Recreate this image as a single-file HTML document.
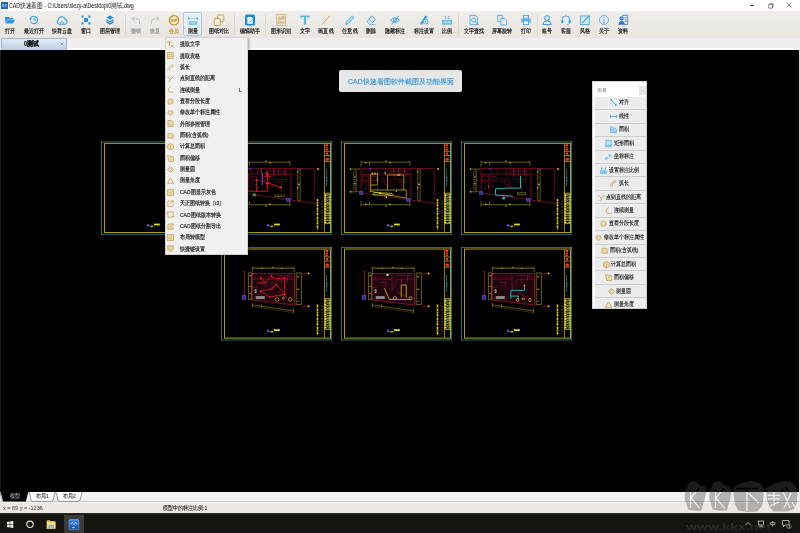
<!DOCTYPE html>
<html><head><meta charset="utf-8">
<style>
*{box-sizing:border-box;margin:0;padding:0}
html,body{width:800px;height:533px;overflow:hidden;background:#000;font-family:"Liberation Sans",sans-serif;color:#333}
.a{position:absolute}
#title,#tb,#tabbar,#menu,#panel,#ltabs,#status,#task{will-change:transform}
#title{left:0;top:0;width:800px;height:11px;background:#fff}
#tb{left:0;top:11px;width:800px;height:27px;background:linear-gradient(#efedea,#e9e5e1)}
#tabbar{left:0;top:38px;width:800px;height:12px;background:#efefef;border-bottom:2px solid #fafafa}
#canvas{left:0;top:50px;width:799px;height:442px;background:#000;border-left:1px solid #1a1a1a}
#rborder{left:799px;top:50px;width:1px;height:442px;background:#d8d8d8}
#ltabs{left:0;top:492.2px;width:800px;height:10.5px;background:#f8f8f8}
#status{left:0;top:503px;width:800px;height:10px;background:#ece9e5}
#task{left:0;top:513px;width:800px;height:20px;background:#141511;border-top:1px solid #2a2a26}
.ti{position:absolute;top:0;width:30px;margin-left:-15px;height:27px}
.ti svg{position:absolute;left:10px;top:3.6px;width:10px;height:10px;overflow:visible}
.ti span{position:absolute;left:-10px;right:-10px;top:17.1px;text-align:center;font-size:6px;line-height:7px;color:#222;-webkit-text-stroke:0.2px currentColor;white-space:nowrap;transform:scaleX(0.835)}
.sep{position:absolute;top:3px;width:1px;height:22px;background:#dcd8d3}
.mi{position:absolute;left:0;width:82px;height:11.35px}
.mi span{position:absolute;left:14px;top:2.8px;font-size:6px;line-height:7px;color:#2c2c2c;-webkit-text-stroke:0.2px currentColor;white-space:nowrap;transform:scaleX(0.835);transform-origin:0 50%}
.mi svg{position:absolute;left:1px;top:2.5px;width:7px;height:7px;overflow:visible}
.pb{position:absolute;left:2px;width:51.5px;height:13.43px;background:#ececec;border-bottom:1px solid #cdcdcd}
.pb div{position:absolute;left:0;right:0;top:2.6px;height:7px;display:flex;justify-content:center;align-items:center;font-size:6px;line-height:7px;color:#262626;-webkit-text-stroke:0.13px currentColor;white-space:nowrap}
.pb b{font-weight:normal;display:block;height:7px;position:relative}.pb b i{font-style:normal;position:absolute;left:0;top:0;transform:scaleX(0.835);transform-origin:0 50%}
.pb svg{display:block;flex:none;width:7px;height:7px;margin-right:1.5px;margin-left:-2px;overflow:visible}
</style></head><body>

<div id="title" class="a">
  <svg class="a" style="left:1px;top:1.5px" width="7" height="7" viewBox="0 0 7 7"><rect x="0" y="0" width="7" height="7" fill="#1a56a8"/><rect x="0.4" y="0.4" width="6.2" height="6.2" fill="#2a6cc0"/><path d="M3 2.6H1.6V4.4H3 M4 2.4V4.6 M5.6 2.4L4.2 3.5L5.6 4.6" fill="none" stroke="#e8f0ff" stroke-width="0.55"/></svg>
  <div class="a" style="left:9.4px;top:1.6px;font-size:6.5px;line-height:8px;color:#1e1e1e;white-space:nowrap;transform:scaleX(0.81);transform-origin:0 50%;-webkit-text-stroke:0.05px currentColor">CAD快速看图 - C:\Users\xiezy-a\Desktop\0测试.dwg</div>
  <div class="a" style="left:749.5px;top:4.9px;width:4.8px;height:0.6px;background:#444"></div>
  <svg class="a" style="left:767.5px;top:2.5px" width="6" height="6" viewBox="0 0 6 6"><path d="M1.8 1.6V0.7H5.2V4.1H4.3" fill="none" stroke="#444" stroke-width="0.6"/><rect x="0.8" y="1.7" width="3.4" height="3.4" fill="none" stroke="#444" stroke-width="0.6"/></svg>
  <svg class="a" style="left:786.2px;top:2.4px" width="6" height="6" viewBox="0 0 6 6"><path d="M0.5 0.5L5.5 5.5M5.5 0.5L0.5 5.5" stroke="#444" stroke-width="0.6"/></svg>
</div>

<div id="tb" class="a">
<div class="a" style="left:183.2px;top:1.2px;width:18.4px;height:24px;background:#e8f0fb;border:1px solid #a9c5ec;border-radius:2px"></div>
<div class="sep" style="left:125.2px"></div>
<div class="sep" style="left:233.7px"></div>
<div class="sep" style="left:265.2px"></div>
<div class="sep" style="left:457.5px"></div>
<div class="sep" style="left:536.7px"></div>
<div class="ti" style="left:9.75px"><svg viewBox="0 0 10 10"><path d="M0.3 2h3.3l1 1H8.4v1.4H2.3L0.3 8.4Z" fill="#1e8fe0"/><path d="M2.5 4.9H9.9L8.2 8.6H0.6Z" fill="#2a9ae8"/></svg><span>打开</span></div>
<div class="ti" style="left:33.7px"><svg viewBox="0 0 10 10"><path d="M1.6 6.6A3.7 3.7 0 1 0 1.3 4.2" fill="none" stroke="#35a3e8" stroke-width="1.1"/><path d="M0 3.2L1.4 5.4L2.9 3.4Z" fill="#35a3e8"/><path d="M5 3V5.3H6.9" fill="none" stroke="#35a3e8" stroke-width="0.9"/></svg><span>最近打开</span></div>
<div class="ti" style="left:62px"><svg viewBox="0 0 10 10"><path d="M2.4 9.2A2.3 2.3 0 0 1 1.3 4.9A3.6 3.8 0 0 1 8.3 4.4A2.5 2.5 0 0 1 8.3 9.2Z" fill="none" stroke="#35a3e8" stroke-width="1.1"/><path d="M3.7 9.2V7L5 5.9L6.3 7V9.2" fill="none" stroke="#35a3e8" stroke-width="0.7"/></svg><span>快看云盘</span></div>
<div class="ti" style="left:86px"><svg viewBox="0 0 10 10"><rect x="3" y="3" width="4" height="4" rx="0.8" fill="#1e8fe0"/><path d="M1.2 2.8V1.2H2.8 M7.2 1.2H8.8V2.8 M8.8 7.2V8.8H7.2 M2.8 8.8H1.2V7.2" fill="none" stroke="#1e8fe0" stroke-width="1.2"/><path d="M2.3 2.3L3.3 3.3M7.7 2.3L6.7 3.3M7.7 7.7L6.7 6.7M2.3 7.7L3.3 6.7" stroke="#1e8fe0" stroke-width="0.6"/></svg><span>窗口</span></div>
<div class="ti" style="left:110px"><svg viewBox="0 0 10 10"><path d="M5 0.6L8.6 2.6L5 4.6L1.4 2.6Z" fill="#1e8fe0"/><path d="M1.4 4.8L5 6.8L8.6 4.8 M1.4 6.9L5 8.9L8.6 6.9" fill="none" stroke="#1e8fe0" stroke-width="1.3"/></svg><span>图层管理</span></div>
<div class="ti" style="left:136px"><svg viewBox="0 0 10 10"><path d="M3.4 1.4L1 3.8L3.4 6.2 M1 3.8H5.6A3 3 0 0 1 8.6 6.8V9" fill="none" stroke="#b9b9b9" stroke-width="0.9"/></svg><span style="color:#9a9a9a">撤销</span></div>
<div class="ti" style="left:155px"><svg viewBox="0 0 10 10"><path d="M6.6 1.4L9 3.8L6.6 6.2 M9 3.8H4.4A3 3 0 0 0 1.4 6.8V9" fill="none" stroke="#b9b9b9" stroke-width="0.9"/></svg><span style="color:#9a9a9a">恢复</span></div>
<div class="ti" style="left:173.7px"><svg viewBox="0 0 10 10"><circle cx="5" cy="5.3" r="4.7" fill="#f3e6c6" stroke="#c48a1e" stroke-width="1.2"/><text x="5" y="6.9" font-size="4.3" text-anchor="middle" fill="#c0861c" font-weight="bold" font-family="Liberation Sans" textLength="7" lengthAdjust="spacingAndGlyphs">VIP</text></svg><span style="color:#c39a4a">会员</span></div>
<div class="ti" style="left:192.5px"><svg viewBox="0 0 10 10"><path d="M0.8 3.4H9.2" stroke="#35a3e8" stroke-width="0.6" stroke-dasharray="1.2 0.6"/><rect x="0" y="2.3" width="1.3" height="2.2" fill="#35a3e8"/><rect x="8.7" y="2.3" width="1.3" height="2.2" fill="#35a3e8"/><rect x="0.6" y="6.3" width="8.8" height="3.6" fill="#6ec5f0"/><path d="M2.4 8.1H7.6" stroke="#fff" stroke-width="0.8" stroke-dasharray="1 0.8"/></svg><span>测量</span></div>
<div class="ti" style="left:218.7px"><svg viewBox="0 0 10 10"><rect x="3.6" y="0" width="6.2" height="6.8" fill="none" stroke="#c9a050" stroke-width="1" rx="0.7"/><rect x="0.2" y="3.6" width="6.2" height="7" fill="#eeebe7" stroke="#c9a050" stroke-width="1" rx="0.7"/></svg><span>图纸对比</span></div>
<div class="ti" style="left:250px"><svg viewBox="0 0 10 10"><rect x="0" y="-0.5" width="10" height="11" rx="1.6" fill="#1a8ce0"/><path d="M2.4 2H6.3L7.8 3.5V8.8H2.4Z" fill="#fff"/><path d="M4.2 7.6L7.6 4.2" stroke="#1a8ce0" stroke-width="0.8"/></svg><span>编辑助手</span></div>
<div class="ti" style="left:280.7px"><svg viewBox="0 0 10 10"><rect x="0.4" y="-0.4" width="9.2" height="10.8" fill="#eee3cc" stroke="#cdb07a" stroke-width="0.8"/><path d="M2 4.2L3.6 1.6L5.2 4.2Z M6 1.8H8.2V4H6Z M2.2 6.2H4.4V8.4H2.2Z" fill="none" stroke="#b38d47" stroke-width="0.55"/><circle cx="7.1" cy="7.3" r="1.1" fill="none" stroke="#b38d47" stroke-width="0.55"/></svg><span>图形识别</span></div>
<div class="ti" style="left:304.7px"><svg viewBox="0 0 10 10"><path d="M0.4 0.4H9.6V2.8H8.2L7.4 2H6.1V9.8H3.9V2H2.6L1.8 2.8H0.4Z" fill="#55b9ee"/></svg><span>文字</span></div>
<div class="ti" style="left:325.7px"><svg viewBox="0 0 10 10"><path d="M0.8 9.6L9.2 0.6" stroke="#c9a050" stroke-width="1"/></svg><span>画直线</span></div>
<div class="ti" style="left:350.2px"><svg viewBox="0 0 10 10"><path d="M0.8 9.6L1.3 7.1L7.4 1L9 2.6L2.9 8.7Z" fill="#bfe3f7" stroke="#35a3e8" stroke-width="0.9"/></svg><span>任意线</span></div>
<div class="ti" style="left:370.5px"><svg viewBox="0 0 10 10"><path d="M5.6 0.8L9.4 4.6L4.9 9.1H3.1L0.9 6.9Z" fill="none" stroke="#35a3e8" stroke-width="0.9"/><path d="M3.2 4.3L6.9 7.8" stroke="#35a3e8" stroke-width="0.9"/><path d="M0.9 6.9L3.2 4.3L6.9 7.8L4.9 9.1H3.1Z" fill="#bfe3f7"/><path d="M4.5 9.6H9.6" stroke="#35a3e8" stroke-width="0.6"/></svg><span>删除</span></div>
<div class="ti" style="left:394.5px"><svg viewBox="0 0 10 10"><path d="M0.4 5.2Q5 0.6 9.6 5.2Q5 9.8 0.4 5.2Z" fill="none" stroke="#35a3e8" stroke-width="0.9"/><circle cx="5" cy="5.2" r="1.5" fill="none" stroke="#35a3e8" stroke-width="0.8"/><path d="M1.6 9.4L8.6 1" stroke="#35a3e8" stroke-width="0.9"/></svg><span>隐藏标注</span></div>
<div class="ti" style="left:423.7px"><svg viewBox="0 0 10 10"><path d="M6.2 0.4L8.4 1.8L3.2 9.6L0.8 9.2Z" fill="#35a3e8"/><circle cx="6.6" cy="6.6" r="2.4" fill="#eeebe7" stroke="#35a3e8" stroke-width="0.8"/><circle cx="6.6" cy="6.6" r="0.8" fill="#35a3e8"/></svg><span>标注设置</span></div>
<div class="ti" style="left:446.7px"><svg viewBox="0 0 10 10"><text x="5" y="3.6" font-size="3.8" text-anchor="middle" fill="#35a3e8" font-weight="bold" font-family="Liberation Sans">1:1</text><rect x="0.2" y="5.4" width="9.6" height="3.8" fill="#79c9f1" stroke="#35a3e8" stroke-width="0.5"/><path d="M1.6 7.3H8.4" stroke="#fff" stroke-width="0.7" stroke-dasharray="0.9 0.6"/></svg><span>比例</span></div>
<div class="ti" style="left:473.7px"><svg viewBox="0 0 10 10"><path d="M1 0.4H6.6L8.6 2.4V9.6H1Z" fill="none" stroke="#35a3e8" stroke-width="0.8"/><circle cx="4.7" cy="5" r="2" fill="none" stroke="#35a3e8" stroke-width="0.8"/><path d="M6.1 6.5L9.2 9.6" stroke="#35a3e8" stroke-width="1"/></svg><span>文字查找</span></div>
<div class="ti" style="left:502.2px"><svg viewBox="0 0 10 10"><path d="M0.6 0.4H5.4V6.6H0.6Z" fill="none" stroke="#35a3e8" stroke-width="0.8"/><path d="M3.8 3.4H7.8L9.6 5.2V10H3.8Z" fill="#eeebe7" stroke="#35a3e8" stroke-width="0.8"/></svg><span>屏幕旋转</span></div>
<div class="ti" style="left:525.5px"><svg viewBox="0 0 10 10"><rect x="2.4" y="0.6" width="5.2" height="2.6" fill="none" stroke="#35a3e8" stroke-width="0.8"/><rect x="0.3" y="3.2" width="9.4" height="4.6" rx="1" fill="#5cbcf0"/><rect x="2.4" y="6" width="5.2" height="3.6" fill="#fff" stroke="#35a3e8" stroke-width="0.8"/></svg><span>打印</span></div>
<div class="ti" style="left:547.2px"><svg viewBox="0 0 10 10"><circle cx="5" cy="3" r="2.4" fill="none" stroke="#2c9be6" stroke-width="1"/><path d="M0.8 9.6Q1 5.8 5 5.8Q9 5.8 9.2 9.6Z" fill="none" stroke="#2c9be6" stroke-width="1"/></svg><span>账号</span></div>
<div class="ti" style="left:566.2px"><svg viewBox="0 0 10 10"><path d="M1.3 6V4.6A3.7 3.7 0 0 1 8.7 4.6V6" fill="none" stroke="#2c9be6" stroke-width="0.9"/><rect x="0.3" y="5" width="2" height="3.2" rx="0.7" fill="#2c9be6"/><rect x="7.7" y="5" width="2" height="3.2" rx="0.7" fill="#2c9be6"/><path d="M8.6 8.2Q8.2 9.6 5.6 9.6" fill="none" stroke="#2c9be6" stroke-width="0.7"/></svg><span>客服</span></div>
<div class="ti" style="left:585px"><svg viewBox="0 0 10 10"><rect x="0.5" y="1" width="8.6" height="8.6" fill="#d9eefa" stroke="#35a3e8" stroke-width="0.8"/><path d="M2 8.2L9.6 0.4" stroke="#35a3e8" stroke-width="1.2"/></svg><span>风格</span></div>
<div class="ti" style="left:603.7px"><svg viewBox="0 0 10 10"><circle cx="5" cy="5" r="4.5" fill="none" stroke="#35a3e8" stroke-width="0.8"/><path d="M5 4.1V7.9 M3.9 7.9H6.1 M4.1 4.1H5" stroke="#35a3e8" stroke-width="0.8"/><circle cx="5" cy="2.6" r="0.6" fill="#35a3e8"/></svg><span>关于</span></div>
<div class="ti" style="left:622.5px"><svg viewBox="0 0 10 10"><path d="M4.2 0.4H9.6V9.6H6" fill="none" stroke="#2a78c8" stroke-width="0.8"/><path d="M6.2 2.8H8.6 M6.8 4.8H8.6 M6.8 6.8H8.6" stroke="#2a78c8" stroke-width="0.7"/><circle cx="3.6" cy="3.4" r="2.1" fill="#2a78c8"/><path d="M0.3 9.8Q0.6 6 3.6 6Q6.6 6 6.9 9.8Z" fill="#2a78c8"/><path d="M1.8 3.2H5.4" stroke="#fff" stroke-width="0.5"/></svg><span>资料</span></div>
<!--/tb-->
</div>

<div id="tabbar" class="a">
  <div class="a" style="left:1px;top:0;width:65.5px;height:11.6px;background:linear-gradient(#e4ebf5,#bdcde3);border:1px solid #9ab3d6;border-bottom:0"></div>
  <div class="a" style="left:24px;top:2.3px;font-size:6.5px;line-height:7px;font-weight:bold;color:#111;-webkit-text-stroke:0.2px currentColor;transform:scaleX(0.85);transform-origin:0 50%">0测试</div>
  <svg class="a" style="left:59.5px;top:4px" width="4" height="4" viewBox="0 0 4 4"><path d="M0.4 0.4L3.6 3.6M3.6 0.4L0.4 3.6" stroke="#8a8a8a" stroke-width="0.6"/></svg>
</div>

<div id="canvas" class="a"></div>
<div id="rborder" class="a"></div>
<!--cv-->
<svg class="a" style="left:0;top:0" width="800" height="533" viewBox="0 0 800 533"><defs><g id="fr">
<rect x="0.5" y="0.5" width="110" height="92.4" fill="none" stroke="#1b6e6e" stroke-width="1"/>
<rect x="3.5" y="2" width="106" height="89.1" fill="none" stroke="#b09c1c" stroke-width="1"/>
<path d="M103.5 2V91.1 M103.5 9.9H109.5 M103.5 14.1H109.5 M103.5 20.1H109.5" stroke="#b09c1c" stroke-width="0.8" fill="none"/>
<g fill="#e06020"><rect x="0" y="0" width="1.2" height="1.2"/><rect x="0" y="92.2" width="1.2" height="1.2"/><rect x="109.8" y="0" width="1.2" height="1.2"/></g>
<path d="M105.8 2.8V9.2" stroke="#ff2a20" stroke-width="2.6" stroke-dasharray="2.4 0.6 1.2 0.6 2"/><path d="M106 11V13.4" stroke="#ff2a20" stroke-width="2"/><path d="M106.2 16.6V19.2" stroke="#ff2a20" stroke-width="3.4"/>
<path d="M105.6 28V45" stroke="#2a80ff" stroke-width="0.8" stroke-dasharray="2.2 0.5"/><path d="M104.8 36.5H107.5 M105 39H107.2" stroke="#2a80ff" stroke-width="0.6"/>
<rect x="103.5" y="51.8" width="5.8" height="30.5" fill="#141000" stroke="#d8c420" stroke-width="0.8"/>
<path d="M104.7 52.5V81.5" stroke="#e4d024" stroke-width="1.5" stroke-dasharray="2.2 0.5 1.4 0.5"/>
<path d="M108.2 52.5V81.5" stroke="#e4d024" stroke-width="1.3" stroke-dasharray="1.6 0.6 2.4 0.5"/>
<path d="M106.4 53V81" stroke="#3a8cff" stroke-width="1.1" stroke-dasharray="1.6 0.9"/>
<path d="M103.5 62H109.3 M103.5 72H109.3" stroke="#d8c420" stroke-width="0.6"/>
<path d="M96.5 57.5V88" stroke="#e0cc20" stroke-width="1.6" stroke-dasharray="2.5 0.5 1 0.5"/>
<path d="M101 59V88" stroke="#b09c1c" stroke-width="0.6" stroke-dasharray="1.5 1.5"/>
<circle cx="47.2" cy="84" r="1.4" fill="#2830d0"/><circle cx="47.2" cy="84" r="0.6" fill="#e0d020"/><path d="M49.2 84.8H52.4" stroke="#e0d020" stroke-width="1.2"/><path d="M53 83.1H58.8" stroke="#e8d820" stroke-width="1.8"/>
</g><g id="p1">
<path d="M19.6 20.4H68.35 M19.6 18.8V24.8 M68.35 18.8V23.9 M28 20.4V23.5 M19.6 63H68.35 M19.6 59.5V64.5 M28 59.5V63 M68.35 59V64.5 M14.6 28V49.5 M10.5 27.3H19 M10.5 50H17" stroke="#b09c1c" stroke-width="0.6" fill="none"/><path d="M12.4 29V48.5" stroke="#b09c1c" stroke-width="1" stroke-dasharray="1.2 0.8" fill="none" opacity="0.8"/>
<path d="M78.7 27.2V58.6 M76.2 27.2V58.6 M76.2 27.2H79.5 M76.2 58.6H79.5" fill="none" stroke="#b09c1c" stroke-width="0.55"/>
<g fill="#d8c020"><circle cx="24.3" cy="21" r="0.8"/><circle cx="48.7" cy="21" r="0.8"/><circle cx="44.5" cy="19.2" r="0.7"/><circle cx="24.3" cy="62.6" r="0.8"/><circle cx="48.7" cy="62.6" r="0.8"/><circle cx="44.5" cy="64.2" r="0.7"/><circle cx="9.1" cy="27.3" r="0.9"/><circle cx="9.1" cy="50" r="0.9"/><circle cx="96.5" cy="27.2" r="1"/><circle cx="77.5" cy="42.6" r="0.9"/><circle cx="76.2" cy="30" r="0.7"/><circle cx="76.2" cy="46" r="0.8"/><circle cx="13.4" cy="35" r="0.7"/><circle cx="13.4" cy="42" r="0.7"/></g>
<path d="M19.6 26.7H92.7V59.5 M19.6 51.1L94.6 61.9 M19.6 26.7V50.5 M69.3 26.7V58 M19.6 38.4H28 M19.6 32.8H28.5V38 M44.5 26.7V32.3 M52 26.7V32.5 M57 26.7V32.5 M63.2 26.7V32.5 M44.5 32.5H69.3 M47 29.5H66" stroke="#8a0e32" stroke-width="0.75" fill="none"/>
<path d="M22.5 41.2A3.2 3.2 0 0 1 25.7 44.4 M67.5 49.2A3.2 3.2 0 0 1 70.7 52.4 M24 45V49" stroke="#8a0e32" stroke-width="0.5" fill="none"/>
<path d="M28.4 32H68.4 M30.3 27V32 M35.9 27V32 M52.8 27V32 M63.4 27V32 M52.8 32V37.6H64.65V32 M27.15 32V50 M19.6 39.5H27 M20.9 34.5H27 M20.9 40.1V34.5 M36 44V50 M44 45H52 M55 40H66 M60 40V50" stroke="#8a0e32" stroke-width="0.55" fill="none"/>
<circle cx="29.65" cy="42.6" r="2.3" fill="none" stroke="#8a0e32" stroke-width="0.55"/><circle cx="40.9" cy="38.25" r="1.9" fill="none" stroke="#8a0e32" stroke-width="0.55"/><circle cx="45.9" cy="40.1" r="3" fill="none" stroke="#8a0e32" stroke-width="0.6"/><rect x="31" y="35" width="4" height="3.5" fill="none" stroke="#8a0e32" stroke-width="0.5"/>
<rect x="17.9" y="49.4" width="3.5" height="3.5" fill="#3c3090" stroke="#7070e0" stroke-width="0.4"/><rect x="65.2" y="56.4" width="3.4" height="3.4" fill="#3c3090" stroke="#7070e0" stroke-width="0.4"/>
<circle cx="28.5" cy="27.2" r="0.9" fill="#4040ff"/>
</g><g id="p2">
<path d="M30.3 26.2H73V57.7L30.3 52.6Z" fill="#22040e" stroke="#8a0e32" stroke-width="0.9"/>

<path d="M30.8 21H72.5 M30.8 19V25.1 M72.5 19V25.1 M30.8 57.5L71.9 63.5 M30.8 55.5V60 M71.9 61V66 M40 57V60" stroke="#b09c1c" stroke-width="0.55" fill="none"/><path d="M30.8 19.9H72.5 M30.8 59.2L71.9 65.2" stroke="#b09c1c" stroke-width="0.4" fill="none" opacity="0.7"/>
<path d="M26.9 25.6H30.3V52H26.9Z" fill="none" stroke="#b09c1c" stroke-width="0.6"/>
<path d="M74.7 25.6H79.8V57.1H74.7Z" fill="none" stroke="#b09c1c" stroke-width="0.6"/>
<path d="M79.8 26.2H87.1 M79.8 58.8H87.1 M23 24V48.7 M21.8 24H24.2" stroke="#8a0e32" stroke-width="0.9"/>
<g fill="#d8c020"><circle cx="87.1" cy="26.2" r="1"/><circle cx="87.1" cy="58.8" r="1"/><circle cx="40.4" cy="21" r="0.7"/><circle cx="51.6" cy="20" r="0.7"/><circle cx="60.1" cy="21" r="0.7"/><circle cx="28.6" cy="28.45" r="0.7"/><circle cx="28.6" cy="39" r="0.7"/><circle cx="28.6" cy="46" r="0.7"/><circle cx="76.5" cy="29.5" r="0.8"/><circle cx="76.5" cy="42" r="0.8"/><circle cx="76.5" cy="54" r="0.7"/></g>
<path d="M30.3 31.8H50.5 M50.5 26.2V43 M50.5 43L56.1 31.8 M55 28.45H70 M56.1 31.8H73 M60 31.8V37 M66 28.45V34 M34 29V31.8 M38 35H46 M44 35V40 M36 40H30.3 M56 45L66 50" stroke="#a01840" stroke-width="0.55" fill="none"/>
<rect x="33.1" y="41.9" width="2" height="4" fill="#8a8a8a"/><rect x="34.2" y="48.7" width="9" height="3" fill="#8a8a8a"/>
<rect x="20.5" y="48.3" width="3.8" height="3.6" fill="#3c3090" stroke="#7070e0" stroke-width="0.4"/>
<circle cx="31" cy="26.6" r="0.8" fill="#4040ff"/>
</g></defs>
<g transform="translate(101 141.4)"><use href="#fr"/><g transform="translate(0.5 0.35)"></g></g>
<g transform="translate(221 141.4)"><use href="#fr"/><g transform="translate(0.5 0.35)"><use href="#p1"/><path d="M35.2 38.5V49.5 M20 49.5H45.8 M45.8 41L59.3 45.7 M45.8 29.2V49.5 M40 27V31 M42 35H50" stroke="#ff2020" stroke-width="0.8" fill="none"/><path d="M40.7 30.9V43.6" stroke="#8040c0" stroke-width="1.1"/><g fill="#ff2020"><circle cx="45.8" cy="33" r="1.2"/><circle cx="45.8" cy="41" r="1.1"/><ellipse cx="45.8" cy="41.2" rx="1.8" ry="0.8"/><circle cx="59.3" cy="45.7" r="1.1"/><circle cx="35.2" cy="38.5" r="1"/></g><circle cx="32.7" cy="52.9" r="1.3" fill="#30b040"/><circle cx="34" cy="53.6" r="0.9" fill="#30b040"/><circle cx="31.5" cy="54.2" r="0.8" fill="#ff2020"/><path d="M53.4 52V54.6H62.7V52 M56.5 52V54.6 M59.6 52V54.6" stroke="#c8b420" stroke-width="0.5" fill="none"/><g fill="#30c040"><circle cx="44.5" cy="30.5" r="0.5"/><circle cx="37" cy="38.5" r="0.5"/><circle cx="34.5" cy="43" r="0.5"/></g></g></g>
<g transform="translate(341 141.4)"><use href="#fr"/><g transform="translate(0.5 0.35)"><use href="#p1"/><path d="M29.1 32.6H36V43.25H29.1 M29.1 32.6V50.75 M46 33.25H62.25V48.25 M46 33.25V48.25 M29.1 48.25H64.75V56.4 M29.1 49.5L64.75 56.4 M44 31.5V33.25" stroke="#d0c018" stroke-width="0.7" fill="none"/><path d="M32.3 50.8L50.5 51.6Q52 52.5 50.5 53.6L32.3 53.2Z" fill="none" stroke="#d8c820" stroke-width="0.8"/><g fill="#e0d020"><circle cx="31" cy="31.6" r="0.8"/><circle cx="33.5" cy="31.6" r="0.8"/><circle cx="36" cy="31.6" r="0.7"/><circle cx="43.5" cy="31" r="0.7"/><circle cx="56.6" cy="33.4" r="0.8"/><circle cx="38.5" cy="51.4" r="1"/><circle cx="44.75" cy="55.5" r="0.9"/><circle cx="54.75" cy="49.5" r="0.7"/><circle cx="36" cy="38" r="0.7"/></g><circle cx="31.5" cy="52.8" r="0.8" fill="#30b040"/><circle cx="33.8" cy="53" r="0.8" fill="#30b040"/><circle cx="58" cy="33" r="0.8" fill="#c0a0ff"/></g></g>
<g transform="translate(461 141.4)"><use href="#fr"/><g transform="translate(0.5 0.35)"><use href="#p1"/><path d="M59 33.9V46.4H45.9L34 47V53.25L51.5 54.5" stroke="#22c4cc" stroke-width="0.9" fill="none"/><circle cx="42.2" cy="56.4" r="1.3" fill="#22c4cc"/><path d="M56 51H64V53H56Z" stroke="#c8b420" stroke-width="0.5" fill="none"/><circle cx="27" cy="45" r="0.8" fill="#ff6020"/></g></g>
<g transform="translate(221 247.0)"><use href="#fr"/><g transform="translate(0.5 0.35)"><use href="#p2"/><path d="M39.3 30.8L43.7 35.8L50 28.3L52.5 31.45L63.1 30.8V47.1L54.95 37.1L50 41.45L39.3 43.95L48.1 49.6L63.1 47.1 M35.6 35.8H43.7" stroke="#ff2424" stroke-width="0.7" fill="none"/><g fill="#ff2424"><circle cx="39.3" cy="30.8" r="1"/><circle cx="50" cy="28.3" r="0.8"/><circle cx="63.1" cy="30.8" r="0.8"/><circle cx="63.1" cy="47.1" r="1"/><circle cx="54.95" cy="37.1" r="0.8"/><circle cx="39.3" cy="43.95" r="1"/><circle cx="48.1" cy="49.6" r="0.8"/></g><g fill="none" stroke="#d8c820" stroke-width="0.6"><circle cx="55.6" cy="52.1" r="1.8"/><circle cx="68.7" cy="52.1" r="1.8"/><circle cx="61.8" cy="50.8" r="1"/></g></g></g>
<g transform="translate(341 247.0)"><use href="#fr"/><g transform="translate(0.5 0.35)"><use href="#p2"/><path d="M42.9 40.8L47.9 52.1H68.5 M59.75 37.7H64.75V50.2 M59.75 37.7V50" stroke="#d4c41c" stroke-width="0.8" fill="none"/><g fill="none" stroke="#d4c41c" stroke-width="0.7"><circle cx="53.5" cy="50.8" r="1.6"/><circle cx="69.1" cy="50.8" r="1.6"/></g><circle cx="46" cy="27.5" r="1.2" fill="#e8e0a0"/></g></g>
<g transform="translate(461 247.0)"><use href="#fr"/><g transform="translate(0.5 0.35)"><use href="#p2"/><path d="M62.9 38V43H49.4V51.5 M49.4 48.7H56.7V51.5" stroke="#22c4cc" stroke-width="0.9" fill="none"/><g fill="none" stroke="#d4c41c" stroke-width="0.7"><ellipse cx="56.1" cy="52.6" rx="1.2" ry="1.6"/><ellipse cx="68.5" cy="52.6" rx="1.2" ry="1.6"/><path d="M60 51.5Q61.8 49.5 63.6 51.5 M60.5 52.5Q61.8 51 63 52.5"/></g><circle cx="62.9" cy="38" r="0.9" fill="#ff8020"/></g></g>
</svg>
<!--/cv-->

<!--ov-->
<div class="a" id="menu" style="left:164.5px;top:37.3px;width:83px;height:218.3px;background:#f0f0f0;border:1px solid #d4d4d4;box-shadow:1px 1px 2px rgba(0,0,0,0.35)">
<div class="mi" style="top:0.50px"><svg viewBox="0 0 8 8"><path d="M0.3 0.6H5.2V1.8H3.4V5.8H2.1V1.8H0.3Z" fill="#c9a04c"/><path d="M4.6 4.4L7.6 7.6M7.4 4.4L4.6 7.4" stroke="#c9a04c" stroke-width="1"/></svg><span>提取文字</span></div>
<div class="mi" style="top:11.85px"><svg viewBox="0 0 8 8"><rect x="0.6" y="0.6" width="6.4" height="7" fill="#f6ecd4" stroke="#c9a04c" stroke-width="0.8"/><path d="M0.6 2.9H7 M0.6 5.2H7 M2.7 0.6V7.6 M4.8 0.6V7.6" stroke="#c9a04c" stroke-width="0.6"/></svg><span>提取表格</span></div>
<div class="mi" style="top:23.20px"><svg viewBox="0 0 8 8"><path d="M1 7.5A6 6 0 0 1 7.5 1 M3 7.5A4 4 0 0 1 7.5 3" fill="none" stroke="#c9a04c" stroke-width="0.8"/></svg><span>弧长</span></div>
<div class="mi" style="top:34.55px"><svg viewBox="0 0 8 8"><path d="M0.5 2L4 5L7.5 1.5 M4 5L2 8" fill="none" stroke="#c9a04c" stroke-width="1"/></svg><span>点到直线的距离</span></div>
<div class="mi" style="top:45.90px"><svg viewBox="0 0 8 8"><path d="M4 0.8Q1 2.5 1.5 5Q2 7.5 5 7.2" fill="none" stroke="#c9a04c" stroke-width="1"/><circle cx="6.5" cy="7" r="0.8" fill="#c9a04c"/></svg><span>连续测量</span><span style="left:73px">L</span></div>
<div class="mi" style="top:57.25px"><svg viewBox="0 0 8 8"><path d="M1 4A3 3 0 1 1 4 7H1.5Z" fill="#e9d9b0" stroke="#c9a04c" stroke-width="0.8"/></svg><span>查看分段长度</span></div>
<div class="mi" style="top:68.60px"><svg viewBox="0 0 8 8"><path d="M4 7.8L0.8 4.5L2.5 1.5L4 3L5.5 1.5L7.2 4.5Z" fill="#e9d9b0" stroke="#c9a04c" stroke-width="0.8"/></svg><span>修改单个标注属性</span></div>
<div class="mi" style="top:79.95px"><svg viewBox="0 0 8 8"><path d="M1 0.6H5L7 2.6V7.6H1Z" fill="#e9d9b0" stroke="#c9a04c" stroke-width="0.8"/><path d="M2.5 5.5H5.5" stroke="#c9a04c" stroke-width="0.7"/></svg><span>外部参照管理</span></div>
<div class="mi" style="top:91.30px"><svg viewBox="0 0 8 8"><path d="M1 1.5H5.5A2 2 0 0 1 7.2 4V7H1Z" fill="#e9d9b0" stroke="#c9a04c" stroke-width="0.8"/></svg><span>面积(含弧线)</span></div>
<div class="mi" style="top:102.65px"><svg viewBox="0 0 8 8"><path d="M4 0.6L7.4 2.2V6.2L4 7.8L0.6 6.2V2.2Z" fill="#e9d9b0" stroke="#c9a04c" stroke-width="0.8"/><path d="M4 2.2V7.8" stroke="#c9a04c" stroke-width="0.6"/></svg><span>计算总面积</span></div>
<div class="mi" style="top:114.00px"><svg viewBox="0 0 8 8"><path d="M0.6 0.6L7.4 2V7.4H2Z" fill="#e9d9b0" stroke="#c9a04c" stroke-width="0.8"/></svg><span>面积偏移</span></div>
<div class="mi" style="top:125.35px"><svg viewBox="0 0 8 8"><path d="M4 0.5L7.5 4L4 7.5L0.5 4Z" fill="none" stroke="#c9a04c" stroke-width="0.9"/><circle cx="4" cy="4" r="1.4" fill="none" stroke="#c9a04c" stroke-width="0.6"/></svg><span>测量圆</span></div>
<div class="mi" style="top:136.70px"><svg viewBox="0 0 8 8"><path d="M4 1L7.5 7.2H0.5Z" fill="none" stroke="#c9a04c" stroke-width="0.9"/></svg><span>测量角度</span></div>
<div class="mi" style="top:148.05px"><svg viewBox="0 0 8 8"><rect x="0.6" y="0.8" width="6.8" height="6.4" fill="#e9d9b0" stroke="#c9a04c" stroke-width="0.8"/><path d="M1.5 6L3.2 3.5L4.5 5L6.5 2.5" fill="none" stroke="#c9a04c" stroke-width="0.6"/></svg><span>CAD图显示灰色</span></div>
<div class="mi" style="top:159.40px"><svg viewBox="0 0 8 8"><path d="M5 1.2H1V7.2H7V4" fill="none" stroke="#c9a04c" stroke-width="0.8"/><path d="M3 5L7 1 M4.8 0.8H7.2V3.2" fill="none" stroke="#c9a04c" stroke-width="0.8"/></svg><span>天正图纸转换（t3）</span></div>
<div class="mi" style="top:170.75px"><svg viewBox="0 0 8 8"><rect x="1" y="1" width="6" height="6" fill="none" stroke="#c9a04c" stroke-width="0.9"/><path d="M0 2.5L1 1L2.2 2.2 M8 5.5L7 7L5.8 5.8" fill="none" stroke="#c9a04c" stroke-width="0.7"/></svg><span>CAD图纸版本转换</span></div>
<div class="mi" style="top:182.10px"><svg viewBox="0 0 8 8"><path d="M5 1.2H1V7.2H7V4" fill="#e9d9b0" stroke="#c9a04c" stroke-width="0.8"/><path d="M3 5L7 1 M4.8 0.8H7.2V3.2" fill="none" stroke="#c9a04c" stroke-width="0.8"/></svg><span>CAD图纸分割导出</span></div>
<div class="mi" style="top:193.45px"><svg viewBox="0 0 8 8"><rect x="0.6" y="0.6" width="6.8" height="7" fill="#e9d9b0" stroke="#c9a04c" stroke-width="0.8"/><path d="M0.6 6.5L3 4L5 6L7.4 4" fill="none" stroke="#c9a04c" stroke-width="0.6"/><circle cx="5" cy="2.5" r="0.9" fill="#c9a04c"/></svg><span>布局转模型</span></div>
<div class="mi" style="top:204.80px"><svg viewBox="0 0 8 8"><path d="M0.6 0.8H7.4V5.5L4 7.8L0.6 5.5Z" fill="#dcc38a" stroke="#c9a04c" stroke-width="0.6"/><path d="M2 3H6 M2 4.6H6" stroke="#fff" stroke-width="0.6"/></svg><span>快捷键设置</span></div>
</div>
<div class="a" id="panel" style="left:592.4px;top:81.1px;width:54.6px;height:228.2px;background:#fff;border:0.5px solid #cfcfcf;overflow:hidden">
<div class="a" style="left:3.5px;top:5px;font-size:5px;line-height:6px;color:#8a8a8a">测量</div>
<div class="a" style="left:46px;top:3.9px;width:7px;height:8.8px;background:#e4e4e4"></div>
<div class="a" style="left:48.3px;top:5.5px;font-size:4px;line-height:5px;color:#bbb">×</div>
<div class="pb" style="top:14.90px"><div><svg viewBox="0 0 7 7"><path d="M1.2 1L5.8 6" stroke="#35a3e8" stroke-width="0.8"/><circle cx="1.2" cy="1" r="0.9" fill="#35a3e8"/><circle cx="5.8" cy="6" r="0.9" fill="#35a3e8"/></svg><b style="width:10.02px"><i>对齐</i></b></div></div>
<div class="pb" style="top:28.33px"><div><svg viewBox="0 0 7 7"><path d="M0.8 3.5H6.2" stroke="#35a3e8" stroke-width="0.6"/><path d="M0.4 2.2V4.8 M6.6 2.2V4.8" stroke="#35a3e8" stroke-width="1"/><path d="M1 3.5L2.2 2.7V4.3Z M6 3.5L4.8 2.7V4.3Z" fill="#35a3e8"/></svg><b style="width:10.02px"><i>线性</i></b></div></div>
<div class="pb" style="top:41.76px"><div><svg viewBox="0 0 7 7"><path d="M0.6 0.5L6.4 3V6.6H0.6Z" fill="#bfe3f7" stroke="#35a3e8" stroke-width="0.6"/><path d="M0.6 3.2H4 M0.6 5H6.4" stroke="#35a3e8" stroke-width="0.5"/></svg><b style="width:10.02px"><i>面积</i></b></div></div>
<div class="pb" style="top:55.19px"><div><svg viewBox="0 0 7 7"><rect x="0.9" y="0.2" width="5.2" height="6.6" fill="#bfe3f7" stroke="#35a3e8" stroke-width="0.6"/><path d="M0.9 5.3H6.1" stroke="#35a3e8" stroke-width="0.6"/></svg><b style="width:20.04px"><i>矩形面积</i></b></div></div>
<div class="pb" style="top:68.62px"><div><svg viewBox="0 0 7 7"><path d="M0.8 6.3L5.8 0.8" stroke="#35a3e8" stroke-width="0.6" stroke-dasharray="1 0.5"/><circle cx="1.5" cy="5.5" r="1.1" fill="#9fd6f5" stroke="#35a3e8" stroke-width="0.4"/><path d="M3.5 2.2H6.5 M4 3.6H6.5" stroke="#35a3e8" stroke-width="0.5"/></svg><b style="width:20.04px"><i>坐标标注</i></b></div></div>
<div class="pb" style="top:82.05px"><div><svg viewBox="0 0 7 7"><rect x="1" y="0.6" width="1.3" height="1.8" fill="#35a3e8"/><rect x="4.7" y="0.6" width="1.3" height="1.8" fill="#35a3e8"/><rect x="0.3" y="3.8" width="6.4" height="2.8" fill="#79c9f1" stroke="#35a3e8" stroke-width="0.4"/></svg><b style="width:30.06px"><i>设置标注比例</i></b></div></div>
<div class="pb" style="top:95.48px"><div><svg viewBox="0 0 7 7"><path d="M0.8 6.5A5 5 0 0 1 6.5 0.8 M2.6 6.5A3 3 0 0 1 6.5 2.6" fill="none" stroke="#c9a04c" stroke-width="0.8"/></svg><b style="width:10.02px"><i>弧长</i></b></div></div>
<div class="pb" style="top:108.91px"><div><svg viewBox="0 0 7 7"><path d="M0.5 1.5L3.5 4.5L6.5 1 M3.5 4.5L1.8 7" fill="none" stroke="#c9a04c" stroke-width="0.9"/></svg><b style="width:35.07px"><i>点到直线的距离</i></b></div></div>
<div class="pb" style="top:122.34px"><div><svg viewBox="0 0 7 7"><path d="M3.5 0.5Q0.8 2 1.2 4.5Q1.8 6.8 4.5 6.5" fill="none" stroke="#c9a04c" stroke-width="0.9"/><circle cx="6" cy="6.3" r="0.7" fill="#c9a04c"/></svg><b style="width:20.04px"><i>连续测量</i></b></div></div>
<div class="pb" style="top:135.77px"><div><svg viewBox="0 0 7 7"><path d="M1 3.5A2.6 2.6 0 1 1 3.6 6.1H1.3Z" fill="#e9d9b0" stroke="#c9a04c" stroke-width="0.8"/></svg><b style="width:30.06px"><i>查看分段长度</i></b></div></div>
<div class="pb" style="top:149.20px"><div><svg viewBox="0 0 7 7"><path d="M3.5 6.8L0.7 4L2.2 1.3L3.5 2.6L4.8 1.3L6.3 4Z" fill="#e9d9b0" stroke="#c9a04c" stroke-width="0.8"/></svg><b style="width:40.08px"><i>修改单个标注属性</i></b></div></div>
<div class="pb" style="top:162.63px"><div><svg viewBox="0 0 7 7"><path d="M1 1.3H4.8A1.8 1.8 0 0 1 6.3 3.5V6.3H1Z" fill="#e9d9b0" stroke="#c9a04c" stroke-width="0.8"/></svg><b style="width:28.39px"><i>面积(含弧线)</i></b></div></div>
<div class="pb" style="top:176.06px"><div><svg viewBox="0 0 7 7"><path d="M3.5 0.5L6.5 1.9V5.4L3.5 6.8L0.5 5.4V1.9Z" fill="#e9d9b0" stroke="#c9a04c" stroke-width="0.8"/><path d="M3.5 1.9V6.8" stroke="#c9a04c" stroke-width="0.6"/></svg><b style="width:25.05px"><i>计算总面积</i></b></div></div>
<div class="pb" style="top:189.49px"><div><svg viewBox="0 0 7 7"><path d="M0.5 0.5L6.5 1.8V6.5H1.8Z" fill="#e9d9b0" stroke="#c9a04c" stroke-width="0.8"/></svg><b style="width:20.04px"><i>面积偏移</i></b></div></div>
<div class="pb" style="top:202.92px"><div><svg viewBox="0 0 7 7"><path d="M3.5 0.4L6.6 3.5L3.5 6.6L0.4 3.5Z" fill="none" stroke="#c9a04c" stroke-width="0.9"/><circle cx="3.5" cy="3.5" r="1.2" fill="none" stroke="#c9a04c" stroke-width="0.6"/></svg><b style="width:15.03px"><i>测量圆</i></b></div></div>
<div class="pb" style="top:216.35px"><div><svg viewBox="0 0 7 7"><path d="M3.5 0.8L6.6 6.3H0.4Z" fill="none" stroke="#c9a04c" stroke-width="0.9"/></svg><b style="width:20.04px"><i>测量角度</i></b></div></div>
</div>
<div class="a" style="left:339px;top:70px;width:122.6px;height:21.6px;background:#e6e6e6;border-radius:2px"></div>
<div class="a" style="left:348px;top:78.4px;font-size:7px;line-height:8px;color:#3a9ad6;-webkit-text-stroke:0.15px currentColor;white-space:nowrap;will-change:transform">CAD快速看图软件截图及功能界面</div>
<!--/ov-->
<div id="ltabs" class="a">
<!--lt-->
<svg class="a" style="left:0;top:0" width="800" height="11" viewBox="0 0 800 11">
<rect x="0" y="0" width="800" height="10" fill="#f0f0f0"/>
<path d="M0 9.6H800" stroke="#b8b8b8" stroke-width="0.8"/>
<path d="M0.5 0L3.2 9.4H25.8L28.3 0Z" fill="#000"/>
<path d="M28.3 0Q29.2 0 29.6 1.5L31 8Q31.4 9.4 32.5 9.4H51.5Q52.6 9.4 53 8L55 0" fill="#fdfdfd" stroke="#555" stroke-width="0.6"/>
<path d="M55 0Q55.9 0 56.3 1.5L57.8 8Q58.2 9.4 59.3 9.4H78.5Q79.6 9.4 80 8L82.2 0" fill="#fdfdfd" stroke="#555" stroke-width="0.6"/>
<path d="M0 0.5L2.6 9.4" stroke="#666" stroke-width="0.5"/>
</svg>
<div class="a" style="left:9.5px;top:1.3px;font-size:6px;line-height:7px;color:#c8d0e0;white-space:nowrap;transform:scaleX(0.835);transform-origin:0 50%">模型</div>
<div class="a" style="left:36px;top:1.3px;font-size:6px;line-height:7px;color:#333;white-space:nowrap;transform:scaleX(0.835);transform-origin:0 50%;-webkit-text-stroke:0.08px currentColor">布局1</div>
<div class="a" style="left:63px;top:1.3px;font-size:6px;line-height:7px;color:#333;white-space:nowrap;transform:scaleX(0.835);transform-origin:0 50%;-webkit-text-stroke:0.08px currentColor">布局2</div>
<!--/lt-->
</div>
<div id="status" class="a">
  <div class="a" style="left:3px;top:2px;font-size:5.5px;line-height:7px;color:#3a3a3a;white-space:nowrap;will-change:transform">x = 69 y = -1236</div>
  <div class="a" style="left:162.5px;top:1.5px;font-size:6px;line-height:7px;color:#222;white-space:nowrap;transform:scaleX(0.835);transform-origin:0 50%;-webkit-text-stroke:0.1px currentColor">模型中的标注比例:1</div>
</div>
<div id="task" class="a">
<!--tk-->
<svg class="a" style="left:0;top:-1px" width="800" height="21" viewBox="0 0 800 21">
<g fill="#f2f2f2"><path d="M7 8.9L9.7 8.5V11.2H7Z"/><path d="M10.2 8.4L13.3 7.9V11.2H10.2Z"/><path d="M7 11.7H9.7V14.4L7 14Z"/><path d="M10.2 11.7H13.3V15L10.2 14.5Z"/></g>
<circle cx="30" cy="11.3" r="3.2" fill="none" stroke="#e6e6e6" stroke-width="1.1"/>
<path d="M46.8 7.2H50L50.8 8.2H55.4V15.8H46.8Z" fill="#e8b84a"/><rect x="46.8" y="8.8" width="8.6" height="7" fill="#f8d87a"/><path d="M48.6 15.8V12.2H53.6V15.8H52.4V13.6H49.8V15.8Z" fill="#3aa8f0"/><rect x="49.8" y="13.6" width="2.6" height="2.2" fill="#f0c050"/>
<rect x="64" y="1.8" width="20" height="19.2" fill="#3a3a38"/>
<defs><linearGradient id="appg" x1="0" y1="0" x2="0" y2="1"><stop offset="0" stop-color="#3a8ee8"/><stop offset="1" stop-color="#0a48b0"/></linearGradient></defs>
<rect x="69" y="6.6" width="9.8" height="10" rx="0.8" fill="url(#appg)" stroke="#c8d8ee" stroke-width="0.4"/>
<path d="M70.8 11.5L72.5 9.2L74 11.8L75.8 9L77.2 12 M73.5 13.5V15.5 M72 14.5H75" stroke="#e8f0ff" stroke-width="0.6" fill="none"/>
<rect x="64" y="20" width="20" height="1" fill="#76b9ed"/>
<path d="M745.5 12L748 9.5L750.5 12" fill="none" stroke="#e0e0e0" stroke-width="0.7"/>
<rect x="758.5" y="8" width="5" height="4" fill="none" stroke="#e0e0e0" stroke-width="0.7"/><path d="M761 12V13.5M759 13.7H763" stroke="#e0e0e0" stroke-width="0.7"/>
<text x="772.5" y="13" font-size="5.5" fill="#e8e8e8" text-anchor="middle" font-family="Liberation Sans">中</text>
<path d="M782.5 7.5H789V12H785L783.5 13.5V12H782.5Z" fill="none" stroke="#e8e8e8" stroke-width="0.7"/>
<circle cx="789" cy="13.5" r="2.2" fill="#141511" stroke="#bbb" stroke-width="0.5"/><text x="789" y="15.3" font-size="3.8" fill="#fff" text-anchor="middle" font-family="Liberation Sans">1</text>
</svg>
<!--/tk-->
</div>

<!--wm-->
<svg class="a" style="left:0;top:0;pointer-events:none" width="800" height="533" viewBox="0 0 800 533">
<defs><mask id="wmk" maskUnits="userSpaceOnUse" x="670" y="470" width="130" height="63">
<rect x="670" y="470" width="130" height="63" fill="#000"/>
<g fill="#fff">
<path d="M689 483L692.5 481.2L696 481.8L700.5 485.5L705.5 486.5L706.2 492L704.5 500L702.5 506L701.5 510.5L695 510.8L688 509.5L686.5 504L684.5 498L685.5 490Z"/>
<path d="M713.6 483L717.1 481.2L720.6 481.8L725.1 485.5L730.1 486.5L731.5 492L730 500L728 506L727 510.5L720 510.8L712.6 509.5L711.1 504L709.1 498L710.1 490Z"/>
<path d="M733.5 487L742 483L752 480.7L760 483L763.8 489L763.5 498L762 506L757 511.7L747 512L738 510.5L735 504L733.5 495Z"/>
<path d="M766 488L775 483.5L785 481L790 481.5L794 484L797.5 492L797 502L794 509L788 511.5L773 511.5L769 506L766.5 498Z"/>
</g>
<g stroke="#000" fill="none" stroke-width="1.3">
<path d="M690.5 489V508 M699 488L691 498L699.5 508"/>
<path d="M715.5 489V508 M724 488L716 498L724.5 508"/>
<path d="M736 488.5H758 M747 488.5V511 M748.5 493L759 503"/>
<path d="M767.5 495.3H780 M768 498.8H780 M774 490V506 M770 506L779 502 M782 489L790 508 M785 487L788 490 M791 493L784 508 M792 502L795 507"/>
</g>
</mask></defs>
<rect x="670" y="470" width="130" height="63" fill="rgb(77,77,77)" fill-opacity="0.37" mask="url(#wmk)"/>
<text x="686" y="529.8" font-size="9.6" font-weight="bold" fill="rgb(80,80,80)" fill-opacity="0.4" font-family="Liberation Sans" textLength="85" lengthAdjust="spacingAndGlyphs">www.kkx.net</text>
</svg>
<!--/wm-->
</body></html>
